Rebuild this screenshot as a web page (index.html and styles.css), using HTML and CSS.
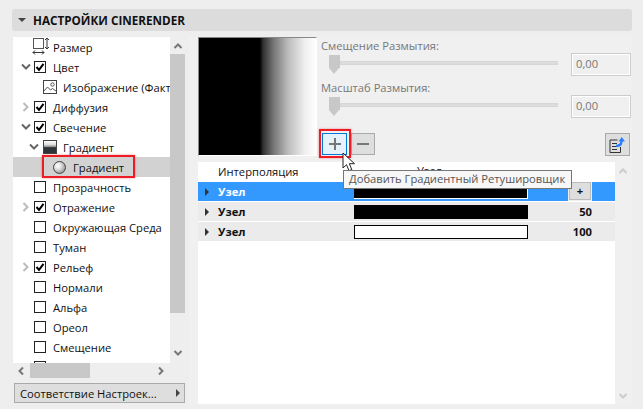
FILE: index.html
```html
<!DOCTYPE html>
<html lang="ru">
<head>
    <meta charset="UTF-8">
    <meta name="viewport" content="width=device-width, initial-scale=1.0">
    <title>Настройки CineRender</title>
    <link rel="stylesheet" href="styles.css">
</head>
<body>
    <!-- Shared icons -->
    <svg class="defs" width="0" height="0">
        <symbol id="chev-down" viewBox="0 0 10 8"><path d="M1 1.5 5 5.5 9 1.5" fill="none" stroke="#666" stroke-width="2"/></symbol>
        <symbol id="chev-right" viewBox="0 0 8 10"><path d="M1.5 1 5.5 5 1.5 9" fill="none" stroke="#bbb" stroke-width="2"/></symbol>
        <symbol id="tick" viewBox="0 0 12 12"><path d="M2.5 6 5 8.8 9.5 2.8" fill="none" stroke="#000" stroke-width="2"/></symbol>
    </svg>

    <header class="section-head">
        <span class="head-arrow"></span>
        <span class="head-title">НАСТРОЙКИ CINERENDER</span>
    </header>

    <div class="main">
        <!-- Left column: channel tree -->
        <div class="left">
            <div class="tree-wrap">
                <ul class="tree">
                    <li class="row">
                        <span class="caret"></span>
                        <svg class="icon-size" width="18" height="18" viewBox="0 0 18 18">
                            <rect x="1.5" y="1.5" width="10" height="10" fill="#fff" stroke="#555"/>
                            <path d="M15 1v11M13 3l2-2 2 2M13 10l2 2 2-2M1 15.500h11M3 13.500l-2 2 2 2M10 13.500l2 2-2 2" fill="none" stroke="#333"/>
                        </svg>
                        <span class="label">Размер</span>
                    </li>
                    <li class="row">
                        <svg class="caret" width="16" height="8"><use href="#chev-down" x="3" width="10" height="8"/></svg>
                        <span class="check"><svg width="12" height="12"><use href="#tick"/></svg></span>
                        <span class="label">Цвет</span>
                    </li>
                    <li class="row row-child">
                        <svg class="icon" width="14" height="14" viewBox="0 0 14 14">
                            <rect x="0.500" y="0.500" width="13" height="13" fill="#fff" stroke="#444"/>
                            <circle cx="9.500" cy="4.500" r="1.700" fill="none" stroke="#555"/>
                            <path d="M1 11l3.500-4 3 3 2-1.500L13 11" fill="none" stroke="#555"/>
                        </svg>
                        <span class="label label-clip">Изображение (Факт</span>
                    </li>
                    <li class="row">
                        <svg class="caret" width="16" height="10"><use href="#chev-right" x="4" width="8" height="10"/></svg>
                        <span class="check"><svg width="12" height="12"><use href="#tick"/></svg></span>
                        <span class="label">Диффузия</span>
                    </li>
                    <li class="row">
                        <svg class="caret" width="16" height="8"><use href="#chev-down" x="3" width="10" height="8"/></svg>
                        <span class="check"><svg width="12" height="12"><use href="#tick"/></svg></span>
                        <span class="label">Свечение</span>
                    </li>
                    <li class="row row-sub">
                        <svg class="caret" width="10" height="8"><use href="#chev-down" width="10" height="8"/></svg>
                        <span class="layer-icon"></span>
                        <span class="label">Градиент</span>
                    </li>
                    <li class="row row-selected">
                        <span class="sphere"></span>
                        <span class="label">Градиент</span>
                    </li>
                    <li class="row"><span class="caret"></span><span class="check"></span><span class="label">Прозрачность</span></li>
                    <li class="row">
                        <svg class="caret" width="16" height="10"><use href="#chev-right" x="4" width="8" height="10"/></svg>
                        <span class="check"><svg width="12" height="12"><use href="#tick"/></svg></span>
                        <span class="label">Отражение</span>
                    </li>
                    <li class="row"><span class="caret"></span><span class="check"></span><span class="label">Окружающая Среда</span></li>
                    <li class="row"><span class="caret"></span><span class="check"></span><span class="label">Туман</span></li>
                    <li class="row">
                        <svg class="caret" width="16" height="10"><use href="#chev-right" x="4" width="8" height="10"/></svg>
                        <span class="check"><svg width="12" height="12"><use href="#tick"/></svg></span>
                        <span class="label">Рельеф</span>
                    </li>
                    <li class="row"><span class="caret"></span><span class="check"></span><span class="label">Нормали</span></li>
                    <li class="row"><span class="caret"></span><span class="check"></span><span class="label">Альфа</span></li>
                    <li class="row"><span class="caret"></span><span class="check"></span><span class="label">Ореол</span></li>
                    <li class="row"><span class="caret"></span><span class="check"></span><span class="label">Смещение</span></li>
                    <li class="row"><span class="caret"></span><span class="check"></span></li>
                </ul>
                <div class="vscroll">
                    <svg class="scroll-arrow" width="10" height="8" viewBox="0 0 10 8"><path d="M1.500 6 5 2.500 8.500 6" fill="none" stroke="#777" stroke-width="2"/></svg>
                    <div class="vthumb"></div>
                    <svg class="scroll-arrow" width="10" height="8" viewBox="0 0 10 8"><path d="M1.500 2 5 5.500 8.500 2" fill="none" stroke="#777" stroke-width="2"/></svg>
                </div>
            </div>
            <div class="hscroll">
                <svg class="hleft" width="8" height="10" viewBox="0 0 8 10"><path d="M6 1.500 2.500 5 6 8.500" fill="none" stroke="#777" stroke-width="2"/></svg>
                <div class="hthumb"></div>
                <svg class="hright" width="8" height="10" viewBox="0 0 8 10"><path d="M2 1.500 5.500 5 2 8.500" fill="none" stroke="#777" stroke-width="2"/></svg>
            </div>
            <button class="match-button">
                <span>Соответствие Настроек...</span>
                <span class="match-arrow"></span>
            </button>
        </div>

        <!-- Right column: preview, sliders and gradient table -->
        <div class="right">
            <div class="top">
                <div class="preview"></div>
                <div class="controls">
                    <div class="slider-group">
                        <div class="slider-label">Смещение Размытия:</div>
                        <div class="slider-line">
                            <div class="slider"><span class="thumb"></span><span class="track"></span></div>
                            <div class="value-box">0,00</div>
                        </div>
                    </div>
                    <div class="slider-group">
                        <div class="slider-label">Масштаб Размытия:</div>
                        <div class="slider-line">
                            <div class="slider"><span class="thumb"></span><span class="track"></span></div>
                            <div class="value-box">0,00</div>
                        </div>
                    </div>
                    <div class="tools">
                        <button class="tool tool-active"><span class="plus"></span></button>
                        <button class="tool"><span class="minus"></span></button>
                        <button class="tool tool-doc">
                            <svg width="18" height="16" viewBox="0 0 18 16">
                                <path d="M8.500 3H1v12.500h10.500V10" fill="none" stroke="#333"/>
                                <path d="M3 6.500h5M3 9.500h5M3 12.500h5" stroke="#333"/>
                                <path d="M7 9c3.500 0 5.500-1.500 5.500-5" fill="none" stroke="#2a7fff" stroke-width="2.400"/>
                                <path d="M9.500 4.500 12.800 0 16 4.500z" fill="#2a7fff"/>
                            </svg>
                        </button>
                    </div>
                </div>
            </div>

            <div class="table-wrap">
                <div class="table">
                    <div class="t-head">
                        <span class="t-name">Интерполяция</span>
                        <span class="t-pos">Узел</span>
                    </div>
                    <div class="t-row t-row-active">
                        <span class="t-arrow"></span>
                        <span class="t-name">Узел</span>
                        <span class="swatch swatch-black"></span>
                        <span class="t-cell-add"><span class="mini-plus">+</span></span>
                    </div>
                    <div class="t-row">
                        <span class="t-arrow"></span>
                        <span class="t-name">Узел</span>
                        <span class="swatch swatch-black"></span>
                        <span class="t-value">50</span>
                    </div>
                    <div class="t-row">
                        <span class="t-arrow"></span>
                        <span class="t-name">Узел</span>
                        <span class="swatch swatch-white"></span>
                        <span class="t-value">100</span>
                    </div>
                </div>
                <div class="table-scroll">
                    <svg width="10" height="8" viewBox="0 0 10 8"><path d="M1.500 6 5 2.500 8.500 6" fill="none" stroke="#ccc" stroke-width="2"/></svg>
                    <svg width="10" height="8" viewBox="0 0 10 8"><path d="M1.500 2 5 5.500 8.500 2" fill="none" stroke="#ccc" stroke-width="2"/></svg>
                </div>
            </div>
        </div>
    </div>

    <!-- Callouts that lie over the dialog -->
    <div class="mark mark-tree"></div>
    <div class="mark mark-plus"></div>
    <svg class="cursor" width="14" height="21" viewBox="0 0 14 21">
        <path d="M1 1v15l3.500-3.300 2.500 6 2.800-1.200-2.500-5.800H12.500z" fill="#fff" stroke="#222"/>
    </svg>
    <div class="tooltip">Добавить Градиентный Ретушировщик</div>
</body>
</html>
```

FILE: styles.css
```css
/* Page */
body {
    position: relative;
    width: 643px;
    height: 409px;
    margin: 0;
    padding: 9px 11px 0 12px;
    box-sizing: border-box;
    overflow: hidden;
    background-color: #eeeeee;
    font-family: "Open Sans", Arial, sans-serif;
    font-size: 11.2px;
    color: #111;
}

.defs {
    position: absolute;
}

/* Section header */
.section-head {
    display: flex;
    align-items: center;
    height: 22px;
    padding-left: 6px;
    background-color: #dcdcdc;
    border-radius: 3px;
}

.head-arrow {
    width: 0;
    height: 0;
    margin-right: 7px;
    border-left: 4px solid transparent;
    border-right: 4px solid transparent;
    border-top: 4px solid #444;
}

.head-title {
    font-weight: 700;
    font-size: 11.7px;
    color: #111;
}

/* Main layout */
.main {
    display: flex;
    margin-top: 6px;
}

.left {
    width: 173px;
    margin-right: 4px;
}

.right {
    flex: 1;
    height: 368px;
    padding-left: 9px;
    background-color: #f0f0f0;
}

/* Tree */
.tree-wrap {
    display: flex;
    margin-left: 1px;
}

.tree {
    width: 157px;
    height: 326px;
    margin: 0;
    padding: 0;
    overflow: hidden;
    list-style: none;
    background-color: #ffffff;
}

.row {
    display: flex;
    align-items: center;
    height: 20px;
    padding-left: 5px;
}

.caret {
    flex: none;
    width: 16px;
}

.check {
    display: block;
    flex: none;
    width: 12px;
    height: 12px;
    box-sizing: border-box;
    margin-right: 7px;
    border: 1px solid #222;
    background-color: #fff;
}

.check svg {
    display: block;
    margin: -1px;
}

.icon-size {
    margin: -2px 3px 0 -2px;
    flex: none;
}

.row-child {
    padding-left: 30px;
}

.row-child .icon {
    flex: none;
    margin-right: 6px;
}

.label-clip {
    white-space: nowrap;
}

.row-sub {
    padding-left: 16px;
}

.row-sub .caret {
    width: 10px;
    margin-right: 4px;
}

.layer-icon {
    flex: none;
    width: 14px;
    height: 14px;
    box-sizing: border-box;
    margin-right: 6px;
    border: 1px solid #444;
    background: linear-gradient(#fff 0, #ddd 30%, #888 50%, #2e3338 55%, #2e3338 100%);
}

.row-selected {
    padding-left: 40px;
    background-color: #d2d2d2;
}

.sphere {
    flex: none;
    width: 13px;
    height: 13px;
    box-sizing: border-box;
    margin-right: 7px;
    border: 1px solid #444;
    border-radius: 50%;
    background: radial-gradient(circle at 35% 35%, #fff 0, #e4e4e4 30%, #777 100%);
}

/* Scrollbars */
.vscroll {
    display: flex;
    flex-direction: column;
    align-items: center;
    width: 15px;
    height: 326px;
}

.scroll-arrow {
    flex: none;
    margin: 5px 0 4px;
}

.vthumb {
    flex: none;
    align-self: stretch;
    height: 259px;
    background-color: #c8c8c8;
    margin-bottom: 36px;
}

.vscroll .scroll-arrow:last-child {
    margin: 0;
}

.hscroll {
    display: flex;
    align-items: center;
    height: 15px;
    margin-left: 1px;
    width: 157px;
}

.hleft {
    margin-left: 4px;
    flex: none;
}

.hthumb {
    width: 60px;
    height: 15px;
    margin-left: 5px;
    background-color: #c8c8c8;
}

.hright {
    margin-left: 67px;
    flex: none;
}

.match-button {
    display: flex;
    align-items: center;
    justify-content: space-between;
    box-sizing: border-box;
    width: 171px;
    height: 20px;
    margin: 5px 0 0 2px;
    padding: 0 4px 0 5px;
    border: 1px solid #aaa;
    background-color: #dedede;
    font: inherit;
    color: #111;
}

.match-arrow {
    width: 0;
    height: 0;
    border-top: 4px solid transparent;
    border-bottom: 4px solid transparent;
    border-left: 4px solid #444;
}

/* Preview and sliders */
.top {
    display: flex;
    height: 125px;
}

.preview {
    flex: none;
    width: 119px;
    height: 119px;
    box-sizing: border-box;
    margin-right: 4px;
    border: 1px solid #ffffff;
    border-top-color: #888;
    border-left-color: #888;
    background: linear-gradient(90deg, #000 52%, #333 55%, #777 64%, #bbb 76%, #eee 90%, #fff 100%);
}

.controls {
    flex: 1;
}

.slider-group {
    height: 42px;
}

.slider-label {
    height: 18px;
    line-height: 17px;
    color: #777;
}

.slider-line {
    display: flex;
    align-items: flex-start;
    height: 24px;
    padding-left: 8px;
}

.slider {
    display: flex;
    width: 229px;
    margin-right: 13px;
}

.thumb {
    flex: none;
    position: relative;
    width: 11px;
    height: 13px;
    background-color: #c8c8c8;
}

.thumb::after {
    content: "";
    position: absolute;
    left: 0;
    top: 13px;
    border-left: 5.5px solid transparent;
    border-right: 5.5px solid transparent;
    border-top: 6px solid #c8c8c8;
}

.track {
    flex: 1;
    height: 4px;
    margin-top: 6px;
    background-color: #dddddd;
    border: 1px solid #d6d6d6;
    box-sizing: border-box;
}

.value-box {
    box-sizing: border-box;
    width: 60px;
    height: 23px;
    margin-top: -2px;
    padding-left: 4px;
    line-height: 20px;
    border: 1px solid #cccccc;
    outline: 1px solid #ffffff;
    outline-offset: -2px;
    color: #777;
}

.tools {
    display: flex;
    align-items: flex-start;
    height: 23px;
    margin-top: 12px;
}

.tool {
    display: flex;
    align-items: center;
    justify-content: center;
    box-sizing: border-box;
    width: 24px;
    height: 22px;
    padding: 0;
    margin-right: 0;
    border: 1px solid #aaaaaa;
    background-color: #dedede;
}

.tool-active {
    width: 25px;
    margin-left: 1px;
    margin-right: 4px;
    border-color: #0078d7;
    background-color: #e5f1fb;
}

.tool-doc {
    width: 25px;
    height: 23px;
    margin-left: 230px;
}

.plus, .minus {
    position: relative;
    display: block;
    width: 12px;
    height: 2px;
    background-color: #777;
}

.plus::after {
    content: "";
    position: absolute;
    left: 5px;
    top: -5px;
    width: 2px;
    height: 12px;
    background-color: #777;
}

/* Gradient table */
.table-wrap {
    display: flex;
    margin-top: 0;
}

.table {
    width: 417px;
    height: 242px;
    background-color: #ffffff;
}

.t-head {
    position: relative;
    height: 20px;
    line-height: 20px;
    padding-left: 20px;
}

.t-pos {
    position: absolute;
    left: 219px;
    top: -1px;
}

.t-row {
    display: flex;
    align-items: center;
    height: 19px;
    margin-bottom: 1px;
    padding-left: 7px;
    background-color: #ebebeb;
    font-weight: 700;
}

.t-row-active {
    background-color: #3399ff;
    color: #ffffff;
}

.t-arrow {
    flex: none;
    width: 0;
    height: 0;
    margin-right: 9px;
    border-top: 4px solid transparent;
    border-bottom: 4px solid transparent;
    border-left: 4px solid #333;
}

.t-name {
    display: inline-block;
    width: 136px;
}

.swatch {
    flex: none;
    box-sizing: border-box;
    width: 174px;
    height: 14px;
    border: 1px solid #000;
}

.swatch-black {
    background-color: #000;
}

.t-row-active .swatch {
    border-color: #fff;
    border-width: 0 1px 1px 0;
}

.swatch-white {
    background-color: #fff;
}

.t-value {
    width: 64px;
    text-align: right;
    color: #111;
}

.t-cell-add {
    display: flex;
    justify-content: center;
    flex: none;
    align-self: stretch;
    width: 24px;
    margin-left: 40px;
    background-color: #eeeeee;
}

.mini-plus {
    display: block;
    box-sizing: border-box;
    width: 22px;
    height: 18px;
    border: 1px solid #bbbbbb;
    background-color: #dedede;
    line-height: 15px;
    text-align: center;
    color: #111;
}

.table-scroll {
    display: flex;
    flex-direction: column;
    justify-content: space-between;
    align-items: center;
    width: 15px;
    height: 242px;
    padding: 5px 0 4px;
    box-sizing: border-box;
}

/* Red callouts, cursor and tooltip */
.mark {
    position: absolute;
    box-sizing: border-box;
    border: 2px solid #ee1c25;
    box-shadow: 0 0 2px rgba(238, 28, 37, 0.5);
}

.mark-tree {
    left: 42px;
    top: 155px;
    width: 93px;
    height: 23px;
}

.mark-plus {
    left: 319px;
    top: 129px;
    width: 32px;
    height: 29px;
}

.cursor {
    position: absolute;
    left: 342px;
    top: 152px;
}

.tooltip {
    position: absolute;
    left: 343px;
    top: 170px;
    box-sizing: border-box;
    width: 229px;
    height: 19px;
    padding-left: 5px;
    line-height: 16px;
    white-space: nowrap;
    border: 1px solid #777777;
    background-color: #f7f7f7;
    color: #555;
}
```
